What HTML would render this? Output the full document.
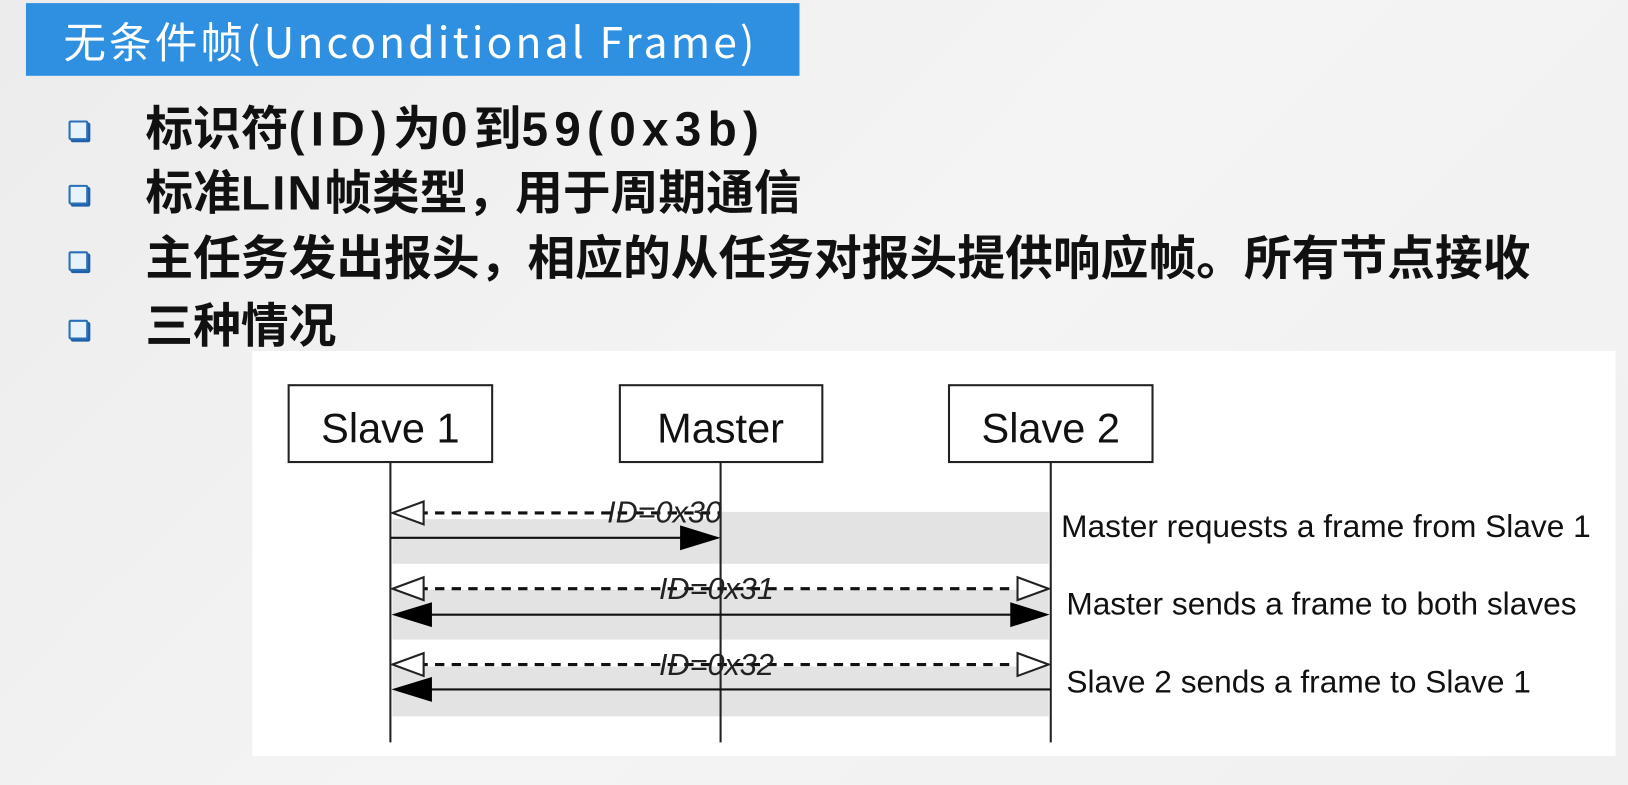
<!DOCTYPE html>
<html><head><meta charset="utf-8"><style>
html,body{margin:0;padding:0}
body{width:1628px;height:785px;overflow:hidden;position:relative;background:linear-gradient(135deg,#ececec 0%,#f4f4f4 50%,#f0f0f0 100%)}
#w{position:absolute;left:0;top:0;width:1568px;height:756px;transform:scale(1.0383);transform-origin:0 0}
.title{position:absolute;left:25px;top:3px;width:745px;height:70px;background:#2f8fe0;color:#fff;font-size:41px;letter-spacing:3px;line-height:70px;padding-left:36px;box-sizing:border-box;white-space:nowrap;font-family:"Noto Sans CJK SC","Liberation Sans",sans-serif}
.b{position:absolute;left:66px;width:15px;height:15px;border:2px solid #2a6fb8;border-radius:2px;background:#e8f2fb;box-shadow:2px 2px 0 #1f5fa8}
.t{position:absolute;left:140px;font-size:46px;letter-spacing:0;font-weight:bold;color:#111;line-height:50px;white-space:nowrap;font-family:"Liberation Sans","Noto Sans CJK SC",sans-serif}
.t i{font-style:normal;letter-spacing:6px}
.diag{position:absolute;left:243px;top:338px;width:1313px;height:390px;background:#fff}
</style></head><body><div id="w">
<div class="title">无条件帧(Unconditional Frame)</div>
<div class="b" style="top:116px"></div><div class="t" style="top:99px">标识符<i>(ID)</i>为<i>0</i>到<i>59(0x3b)</i></div>
<div class="b" style="top:178px"></div><div class="t" style="top:161px">标准<span style="letter-spacing:2px">LIN</span>帧类型，用于周期通信</div>
<div class="b" style="top:242px"></div><div class="t" style="top:224px">主任务发出报头，相应的从任务对报头提供响应帧。所有节点接收</div>
<div class="b" style="top:308px"></div><div class="t" style="top:289px">三种情况</div>
<div class="diag"></div>
<svg width="1568" height="756" style="position:absolute;left:0;top:0" font-family="Liberation Sans, sans-serif">
<g fill="#e3e3e3">
<rect x="378" y="500" width="316" height="43"/><rect x="694" y="493" width="316" height="50"/>
<rect x="378" y="568" width="632" height="48"/>
<rect x="378" y="642" width="632" height="48"/>
</g>
<g fill="#fff" stroke="#222" stroke-width="2">
<rect x="278" y="371" width="196" height="74"/><rect x="597" y="371" width="195" height="74"/><rect x="914" y="371" width="196" height="74"/>
</g>
<g font-size="40" fill="#111" text-anchor="middle">
<text x="376" y="426">Slave 1</text><text x="694" y="426">Master</text><text x="1012" y="426">Slave 2</text>
</g>
<g stroke="#222" stroke-width="2">
<line x1="376" y1="445" x2="376" y2="715"/><line x1="694" y1="445" x2="694" y2="715"/><line x1="1012" y1="445" x2="1012" y2="715"/>
</g>
<g stroke="#111" stroke-width="3" stroke-dasharray="9,7">
<line x1="403" y1="494" x2="694" y2="494"/>
<line x1="403" y1="567" x2="985" y2="567"/>
<line x1="403" y1="640" x2="985" y2="640"/>
</g>
<g stroke="#111" stroke-width="2">
<line x1="376" y1="518" x2="660" y2="518"/>
<line x1="410" y1="592" x2="980" y2="592"/>
<line x1="410" y1="664" x2="1012" y2="664"/>
</g>
<g fill="#fff" stroke="#222" stroke-width="2">
<polygon points="378,494 408,483 408,505"/>
<polygon points="378,567 408,556 408,578"/><polygon points="1010,567 980,556 980,578"/>
<polygon points="378,640 408,629 408,651"/><polygon points="1010,640 980,629 980,651"/>
</g>
<g fill="#000">
<polygon points="694,518 655,506 655,530"/>
<polygon points="377,592 416,580 416,604"/><polygon points="1011,592 973,580 973,604"/>
<polygon points="377,664 416,652 416,676"/>
</g>
<g font-size="29.5" font-style="italic" fill="#222" text-anchor="middle">
<text x="640" y="503">ID=0x30</text><text x="690" y="577">ID=0x31</text><text x="690" y="650">ID=0x32</text>
</g>
<g font-size="30.5" fill="#111">
<text x="1022" y="517">Master requests a frame from Slave 1</text>
<text x="1027" y="592">Master sends a frame to both slaves</text>
<text x="1027" y="667">Slave 2 sends a frame to Slave 1</text>
</g>
</svg>
</div></body></html>
